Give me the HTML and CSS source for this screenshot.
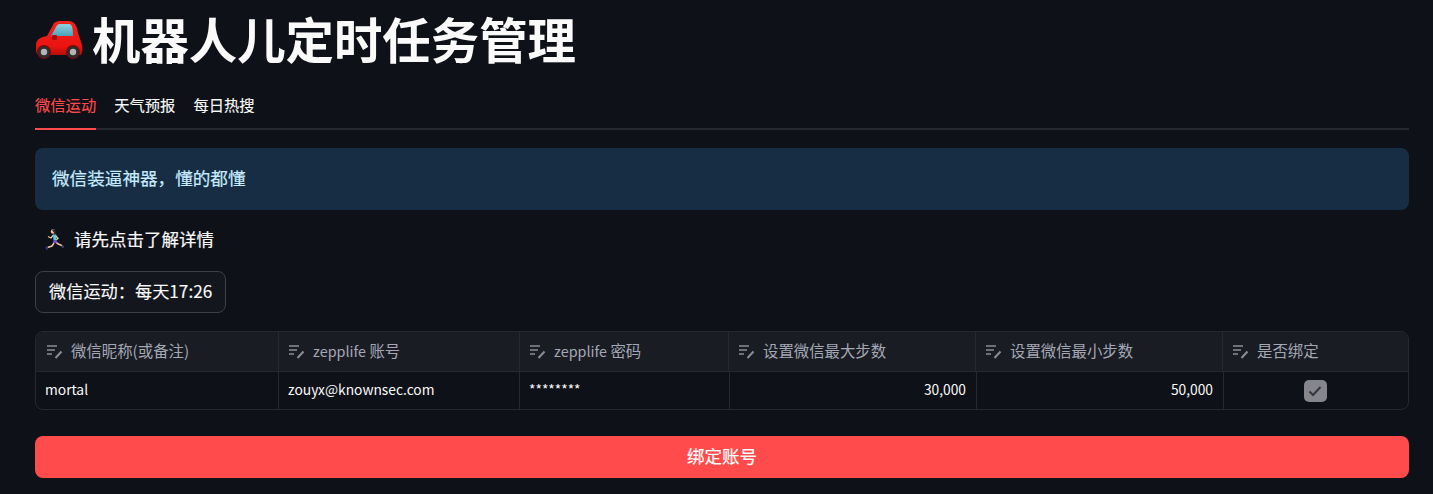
FILE: index.html
```html
<!DOCTYPE html>
<html lang="zh">
<head>
    <meta charset="UTF-8">
    <meta name="viewport" content="width=device-width, initial-scale=1.0">
    <title>机器人儿定时任务管理</title>
    <link rel="stylesheet" href="styles.css">
</head>
<body>
    <svg class="defs" width="0" height="0">
        <defs>
            <linearGradient id="car-body" x1="0" y1="0" x2="0" y2="1">
                <stop offset="0" stop-color="#f5231c"/>
                <stop offset="0.75" stop-color="#ea1410"/>
                <stop offset="1" stop-color="#b80c0c"/>
            </linearGradient>
            <linearGradient id="car-glass" x1="0" y1="0" x2="0" y2="1">
                <stop offset="0" stop-color="#8ed2df"/>
                <stop offset="1" stop-color="#4aa3bb"/>
            </linearGradient>
        </defs>
        <symbol id="text-col" viewBox="0 0 18 16">
            <path d="M1 2H11M1 6H9M1 10H6" stroke="#8b8d94" stroke-width="1.4" fill="none"/>
            <path d="M9.500 14L15.500 7.500" stroke="#8b8d94" stroke-width="2" fill="none"/>
        </symbol>
    </svg>

    <h1 class="title">
        <svg class="car" viewBox="0 0 48 38" width="48" height="38">
            <path d="M1 31 L1 24 C1 19 5 16 12 15 L18 4 C19 1 22 0 26 0 L33 0 C40 0 42 5 43 12 L47 24 C48 28 47 32 46 34 L3 34 Z" fill="url(#car-body)"/>
            <path d="M16 15 L21 6 C22 4 23 3 25 3 L34 3 C37 3 38 7 38 15 Z" fill="url(#car-glass)"/>
            <rect x="17" y="14" width="5" height="5" rx="1" fill="#a80b0b"/>
            <circle cx="9" cy="31" r="7" fill="#7c0808"/>
            <circle cx="38" cy="31" r="7" fill="#7c0808"/>
            <circle cx="9" cy="31" r="6" fill="#2e2e2e"/>
            <circle cx="9" cy="31" r="3.200" fill="#b5b5b5"/>
            <circle cx="38" cy="31" r="6" fill="#2e2e2e"/>
            <circle cx="38" cy="31" r="3.200" fill="#b5b5b5"/>
        </svg>
        <span>机器人儿定时任务管理</span>
    </h1>

    <div class="tabs">
        <div class="tab active">微信运动</div>
        <div class="tab">天气预报</div>
        <div class="tab">每日热搜</div>
    </div>

    <div class="info">微信装逼神器，懂的都懂</div>

    <div class="expander">
        <svg class="runner" viewBox="0 0 22 22" width="22" height="22">
            <circle cx="9" cy="2.500" r="2.200" fill="#f0c39c"/>
            <path d="M8 1 C10 0 12 1 12 3 L13 6 L11 5 Z" fill="#2a2226"/>
            <path d="M9.500 6 L7 9 L4 7.500" stroke="#f0c39c" stroke-width="1.300" fill="none"/>
            <path d="M11.500 6.500 L14 9.500 L12 11" stroke="#f0c39c" stroke-width="1.300" fill="none"/>
            <path d="M9 5.500 L12 5.500 L12.500 11 L9.500 11 Z" fill="#58cfe0"/>
            <path d="M9.500 11 L12.500 11 L13.500 14 L9 14 Z" fill="#7b4fd0"/>
            <path d="M10 14 L8 17 L3.500 18.500" stroke="#f0c39c" stroke-width="1.500" fill="none"/>
            <path d="M12.500 14 L15.500 15.500 L18.500 17" stroke="#f0c39c" stroke-width="1.500" fill="none"/>
            <path d="M1.500 18 L4 17.500 L4 20 L2 21 Z M18 15.500 L20.500 17.500 L19 19.500 L17.500 18 Z" fill="#353c78"/>
        </svg>
        <span>请先点击了解详情</span>
    </div>

    <div class="pill-row">
        <button class="pill" type="button">微信运动：每天17:26</button>
    </div>

    <div class="grid">
        <div class="row head">
            <div class="cell"><svg class="col-icon" width="18" height="16"><use href="#text-col"/></svg>微信昵称(或备注)</div>
            <div class="cell"><svg class="col-icon" width="18" height="16"><use href="#text-col"/></svg><span class="latin">zepplife</span>&nbsp;账号</div>
            <div class="cell"><svg class="col-icon" width="18" height="16"><use href="#text-col"/></svg><span class="latin">zepplife</span>&nbsp;密码</div>
            <div class="cell"><svg class="col-icon" width="18" height="16"><use href="#text-col"/></svg>设置微信最大步数</div>
            <div class="cell"><svg class="col-icon" width="18" height="16"><use href="#text-col"/></svg>设置微信最小步数</div>
            <div class="cell"><svg class="col-icon" width="18" height="16"><use href="#text-col"/></svg>是否绑定</div>
        </div>
        <div class="row body-row">
            <div class="cell">mortal</div>
            <div class="cell">zouyx@knownsec.com</div>
            <div class="cell">********</div>
            <div class="cell num">30,000</div>
            <div class="cell num">50,000</div>
            <div class="cell check-cell">
                <span class="check">
                    <svg viewBox="0 0 16 16" width="16" height="16"><path d="M2.500 8.500L6 12L13.500 4" stroke="#34363c" stroke-width="2" fill="none"/></svg>
                </span>
            </div>
        </div>
    </div>

    <button class="submit" type="button">绑定账号</button>
</body>
</html>
```

FILE: styles.css
```css
body {
    margin: 0;
    padding: 0 24px 0 35px;
    height: 494px;
    box-sizing: border-box;
    overflow: hidden;
    background-color: #0e1117;
    color: #fafafa;
    font-family: "Noto Sans CJK SC", "Noto Sans", sans-serif;
}
.defs {
    position: absolute;
}
.title {
    display: flex;
    align-items: center;
    gap: 9px;
    margin: 0;
    height: 80px;
    padding-bottom: 4px;
    box-sizing: border-box;
    font-size: 48.4px;
    font-weight: 700;
    line-height: 1;
}
.car {
    flex: none;
    margin-top: 3px;
}
.tabs {
    display: flex;
    gap: 18px;
    height: 50px;
    box-sizing: border-box;
    border-bottom: 2px solid #26282e;
    font-size: 15.3px;
    -webkit-text-stroke: 0.12px;
}
.tab {
    height: 50px;
    line-height: 48px;
    box-sizing: border-box;
}
.tab.active {
    color: #ff4b4b;
    border-bottom: 2px solid #ff4b4b;
}
.info {
    margin-top: 18px;
    height: 62px;
    line-height: 60px;
    padding-left: 17px;
    background: #172d43;
    border-radius: 8px;
    color: #c7ebff;
    font-size: 17.6px;
    -webkit-text-stroke: 0.2px;
}
.expander {
    display: flex;
    align-items: center;
    gap: 8px;
    height: 24px;
    margin-top: 18px;
    padding-left: 9px;
    font-size: 17.5px;
    -webkit-text-stroke: 0.2px;
}
.expander span {
    margin-top: -4px;
}
.pill-row {
    margin-top: 19px;
}
.pill {
    height: 42px;
    padding: 0 13px 3px;
    background: #13161d;
    border: 1px solid #3e4048;
    border-radius: 8px;
    color: #fafafa;
    font-family: inherit;
    font-size: 17.2px;
    -webkit-text-stroke: 0.12px;
}
.grid {
    margin-top: 18px;
    border: 1px solid #26282e;
    border-radius: 8px;
    overflow: hidden;
    box-sizing: border-box;
    height: 79px;
}
.row {
    display: grid;
}
.cell {
    display: flex;
    align-items: center;
    padding: 0 9px 3px;
    border-right: 1px solid #26282e;
    font-size: 13.8px;
    box-sizing: border-box;
    min-width: 0;
    white-space: nowrap;
}
.cell:last-child {
    border-right: none;
}
.head {
    grid-template-columns: 243px 241px 209px 247px 247px 1fr;
    height: 40px;
    background: #1a1c24;
    border-bottom: 1px solid #26282e;
    box-sizing: border-box;
    color: #a3a8b4;
}
.head .cell {
    font-size: 15.4px;
}
.head .cell:first-child {
    padding-left: 10px;
}
.latin {
    font-size: 14.4px;
}
.col-icon {
    flex: none;
    margin-right: 7px;
    margin-top: 3px;
}
.body-row {
    grid-template-columns: 243px 241px 210px 247px 247px 1fr;
    height: 37px;
}
.num {
    justify-content: flex-end;
    padding-right: 10px;
}
.check-cell {
    justify-content: center;
    padding: 0 2px 0 0;
}
.check {
    display: flex;
    align-items: center;
    justify-content: center;
    width: 23px;
    height: 22px;
    border-radius: 5px;
    background: #85868b;
}
.submit {
    display: block;
    width: 100%;
    height: 42px;
    margin-top: 26px;
    padding-bottom: 4px;
    background: #ff4b4b;
    border: none;
    border-radius: 8px;
    color: #fff;
    font-family: inherit;
    font-size: 17.5px;
    -webkit-text-stroke: 0.2px;
}
```
